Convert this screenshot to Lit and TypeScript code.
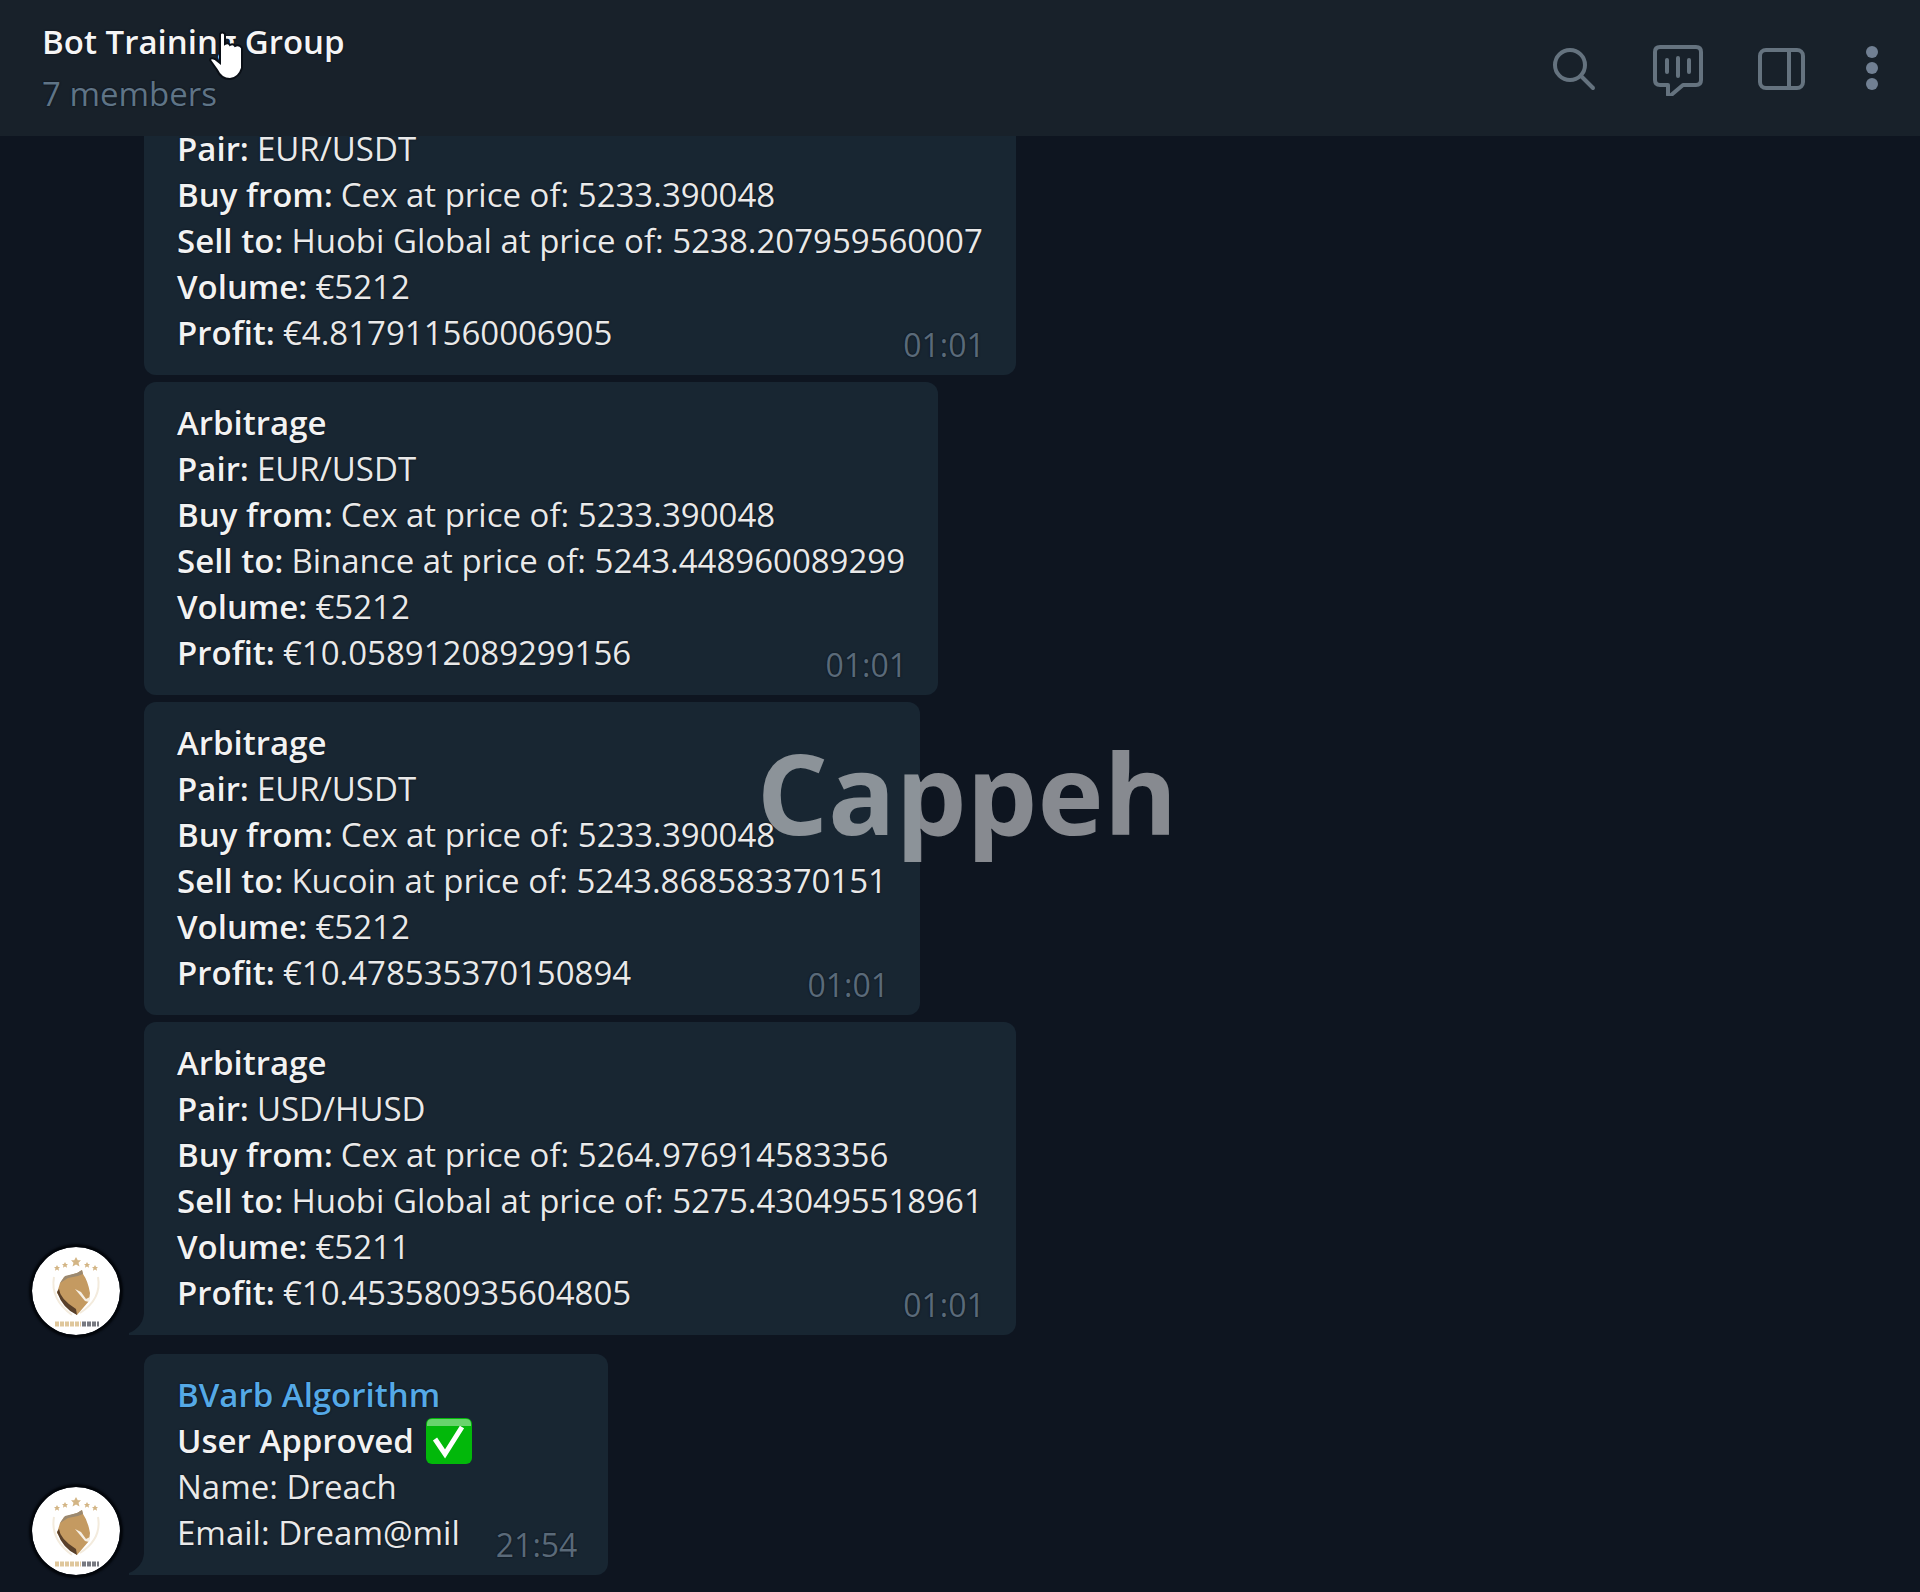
import { LitElement, html, css, svg, nothing } from "lit";
import { customElement, property } from "lit/decorators.js";

interface Line {
  label?: string;
  text?: string;
  check?: boolean;
}

interface Message {
  sender?: string;
  lines: Line[];
  time: string;
  avatar?: boolean;
  continued?: boolean;
}

const trade = (
  pair: string,
  buy: string,
  sell: string,
  volume: string,
  profit: string,
  extra: { avatar?: boolean; continued?: boolean } = {},
): Message => ({
  lines: [
    ...(extra.continued ? [] : [{ label: "Arbitrage" }]),
    { label: "Pair:", text: pair },
    { label: "Buy from:", text: buy },
    { label: "Sell to:", text: sell },
    { label: "Volume:", text: volume },
    { label: "Profit:", text: profit },
  ],
  time: "01:01",
  ...extra,
});

const MESSAGES: Message[] = [
  trade("EUR/USDT", "Cex at price of: 5233.390048", "Huobi Global at price of: 5238.207959560007", "€5212", "€4.817911560006905", { continued: true }),
  trade("EUR/USDT", "Cex at price of: 5233.390048", "Binance at price of: 5243.448960089299", "€5212", "€10.058912089299156"),
  trade("EUR/USDT", "Cex at price of: 5233.390048", "Kucoin at price of: 5243.868583370151", "€5212", "€10.478535370150894"),
  trade("USD/HUSD", "Cex at price of: 5264.976914583356", "Huobi Global at price of: 5275.430495518961", "€5211", "€10.453580935604805", { avatar: true }),
  {
    sender: "BVarb Algorithm",
    lines: [
      { label: "User Approved", check: true },
      { text: "Name: Dreach" },
      { text: "Email: Dream@mil" },
    ],
    time: "21:54",
    avatar: true,
  },
];

const star = (x: number, y: number, r: number) =>
  svg`<path fill="#d3b585" d="M${x} ${y - r}l${r * 0.35} ${r * 0.65}h${r * 0.65}l${-r * 0.5} ${r * 0.5}l${r * 0.2} ${r * 0.75}l${-r * 0.7} ${-r * 0.4}l${-r * 0.7} ${r * 0.4}l${r * 0.2} ${-r * 0.75}l${-r * 0.5} ${-r * 0.5}h${r * 0.65}z"/>`;

@customElement("chat-message")
export class ChatMessage extends LitElement {
  @property({ attribute: false }) message!: Message;

  static styles = css`
    :host {
      display: flex;
      align-items: flex-end;
      gap: 24px;
    }
    .avatar {
      flex: none;
      width: 88px;
      height: 88px;
    }
    .badge {
      display: block;
      border-radius: 50%;
      box-shadow: 0 0 2px 3px #03060b;
    }
    .bubble {
      position: relative;
      padding: 18px 33px 19px;
      border-radius: 12px;
      background: #182632;
      color: #e9e9e9;
    }
    .continued {
      padding-top: 0;
      border-top-left-radius: 0;
      border-top-right-radius: 0;
    }
    .tailed {
      border-bottom-left-radius: 0;
    }
    .tail {
      position: absolute;
      left: -16px;
      bottom: 0;
      fill: #182632;
    }
    .line {
      display: flex;
      align-items: center;
      gap: 8px;
      height: 46px;
      white-space: nowrap;
    }
    .continued .line:first-child {
      height: 36px;
      align-items: flex-end;
    }
    .label {
      font-weight: 600;
      color: #f2f2f2;
    }
    .check {
      margin-left: 4px;
    }
    .sender {
      font-weight: 600;
      color: #55a9e6;
    }
    .time {
      margin: 0 -2px -24px auto;
      padding-left: 28px;
      font-size: 32px;
      color: #5a6a79;
    }
  `;

  private renderAvatar() {
    return html`<svg class="badge" width="88" height="88" viewBox="0 0 88 88" role="img" aria-label="Avatar">
      <circle cx="44" cy="44" r="44" fill="#fff" />
      ${star(25, 21, 3)}${star(33, 18, 3)}${star(44, 15, 5)}${star(55, 18, 3)}${star(63, 21, 3)}
      <path d="M22 30Q18 52 40 68M66 30Q70 52 48 66" fill="none" stroke="#f3ebdd" stroke-width="2" />
      <path d="M28 36L32 30L45 26L50 23L51 27Q56 34 58 46L57 54L45 68L34 59L25 46Z" fill="#c49a61" />
      <path d="M27 42Q28 52 44 62L45 68Q31 62 25 45Z" fill="#59402a" />
      <path d="M28 36L33 29L45 26L50 23L51 27L46 29L36 31Z" fill="#9b8970" />
      <path d="M43 42L49 45L54 52L58 50L57 55L53 54L48 48Z" fill="#f6efe4" />
      <path d="M23 77h26" stroke="#dfc79c" stroke-width="5" stroke-dasharray="4 1" />
      <path d="M50 77h17" stroke="#777980" stroke-width="5" stroke-dasharray="4 1" />
    </svg>`;
  }

  private renderCheck() {
    return html`<svg class="check" width="46" height="46" viewBox="0 0 46 46" role="img" aria-label="Check mark">
      <rect width="46" height="46" rx="6" fill="#02b80a" />
      <path d="M1 8V6Q1 1 6 1H40Q45 1 45 6V8Z" fill="#68d46c" />
      <path d="M9 21L19 36L36 9" fill="none" stroke="#fff" stroke-width="5" />
    </svg>`;
  }

  render() {
    const { sender, lines, time, avatar, continued } = this.message;
    return html`
      <div class="avatar">${avatar ? this.renderAvatar() : nothing}</div>
      <div class="bubble ${avatar ? "tailed" : ""} ${continued ? "continued" : ""}">
        ${sender ? html`<div class="line sender">${sender}</div>` : nothing}
        ${lines.map(
          (line, i) => html`<div class="line">
            ${line.label ? html`<span class="label">${line.label}</span>` : nothing}
            ${line.text ? html`<span>${line.text}</span>` : nothing}
            ${line.check ? this.renderCheck() : nothing}
            ${i === lines.length - 1 ? html`<time class="time">${time}</time>` : nothing}
          </div>`,
        )}
        ${avatar
          ? html`<svg class="tail" width="16" height="22" viewBox="0 0 16 22" aria-hidden="true"><path d="M16 0Q15 14 1 20V22H16Z" /></svg>`
          : nothing}
      </div>
    `;
  }
}

@customElement("app-root")
export class AppRoot extends LitElement {
  static styles = css`
    :host {
      display: flex;
      flex-direction: column;
      position: relative;
      min-height: 100vh;
      background: #0e1520;
      font-family: "Open Sans", "Noto Sans", sans-serif;
      font-size: 33px;
      line-height: 46px;
      text-shadow: 0 0 2px #050a14;
    }
    .header {
      flex: none;
      display: flex;
      justify-content: space-between;
      align-items: center;
      padding: 16px 42px;
      background: #18212a;
    }
    .title {
      margin: 0;
      font-size: 33px;
      line-height: 52px;
      font-weight: 600;
      color: #f5f5f5;
    }
    .members {
      margin: 0;
      line-height: 52px;
      color: #5f7486;
    }
    .actions {
      display: flex;
      gap: 48px;
    }
    .action {
      display: flex;
      padding: 0;
      border: 0;
      background: none;
      color: #65737f;
    }
    .action:last-child {
      margin-left: 8px;
    }
    .icon {
      fill: none;
      stroke: currentColor;
      stroke-width: 4;
      stroke-linecap: round;
      stroke-linejoin: round;
    }
    .dots {
      fill: #718093;
    }
    .cursor {
      position: absolute;
      left: 208px;
      top: 30px;
    }
    .feed {
      flex: 1;
      display: flex;
      flex-direction: column;
      justify-content: flex-end;
      gap: 7px;
      padding: 0 32px 17px;
    }
    .new-group {
      margin-top: 12px;
    }
    .watermark {
      position: absolute;
      inset: 0;
      display: flex;
      align-items: center;
      justify-content: center;
      padding: 0 0 8px 14px;
      font-size: 112px;
      font-weight: 700;
      color: rgb(255 255 255 / 50%);
      text-shadow: none;
      pointer-events: none;
    }
  `;

  render() {
    return html`
      <header class="header">
        <div>
          <h1 class="title">Bot Training Group</h1>
          <p class="members">7 members</p>
        </div>
        <div class="actions">
          <button class="action" aria-label="Search">
            <svg class="icon" width="56" height="56" viewBox="0 0 56 56"><circle cx="24" cy="25" r="15" /><path d="M35 36L47 48" /></svg>
          </button>
          <button class="action" aria-label="Voice chat">
            <svg class="icon" width="56" height="56" viewBox="0 0 56 56"><path d="M10 7H46Q51 7 51 12V40Q51 45 46 45H33L20 56L18 55V45H10Q5 45 5 40V12Q5 7 10 7ZM17 20V32M28 18V36M39 20V32" /></svg>
          </button>
          <button class="action" aria-label="Side panel">
            <svg class="icon" width="56" height="56" viewBox="0 0 56 56"><rect x="6" y="10" width="43" height="38" rx="6" /><path d="M35 11V47" /></svg>
          </button>
          <button class="action" aria-label="More">
            <svg class="dots" width="12" height="56" viewBox="0 0 12 56"><circle cx="6" cy="12" r="6" /><circle cx="6" cy="28" r="6" /><circle cx="6" cy="44" r="6" /></svg>
          </button>
        </div>
      </header>
      <main class="feed">
        ${MESSAGES.map((m) => html`<chat-message class=${m.sender ? "new-group" : ""} .message=${m}></chat-message>`)}
      </main>
      <svg class="cursor" width="40" height="52" viewBox="0 0 40 52" aria-hidden="true">
        <path d="M12 4Q14 1 17 4V14Q20 12 22 15Q25 13 27 16Q31 14 34 18V38Q31 48 22 49Q13 49 9 40L2 30Q3 27 7 29L12 33Z" fill="#fff" stroke="#0a0f16" stroke-width="2" />
      </svg>
      <div class="watermark">Cappeh</div>
    `;
  }
}
